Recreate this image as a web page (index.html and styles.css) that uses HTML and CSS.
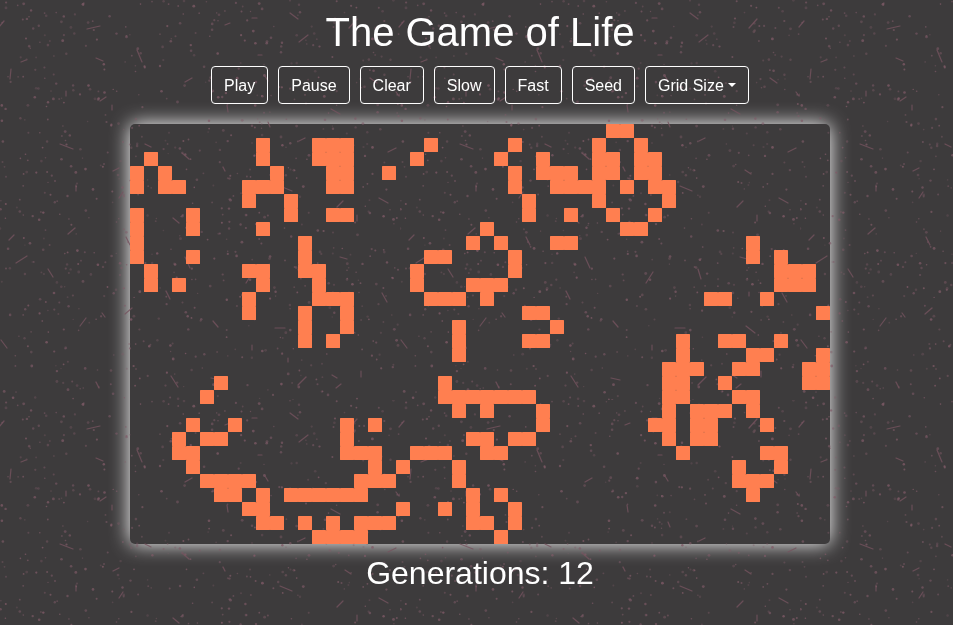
FILE: index.html
```html
<!DOCTYPE html>
<html lang="en">

<head>
    <meta charset="UTF-8">
    <meta name="viewport" content="width=device-width, initial-scale=1.0">
    <title>The Game of Life</title>
    <link rel="stylesheet" href="styles.css">
</head>

<body>
    <main class="page">
        <h1 class="title">The Game of Life</h1>
        <div class="toolbar">
            <button class="btn">Play</button>
            <button class="btn">Pause</button>
            <button class="btn">Clear</button>
            <button class="btn">Slow</button>
            <button class="btn">Fast</button>
            <button class="btn">Seed</button>
            <button class="btn dropdown-toggle">Grid Size</button>
        </div>
        <div class="board" id="board"></div>
        <h2 class="generations">Generations: 12</h2>
    </main>
    <div class="texture" id="texture"></div>
    <script src="script.js"></script>
</body>

</html>
```

FILE: styles.css
```css
html,
body {
    height: 100%;
    overflow: hidden;
}

body {
    margin: 0;
    background-color: #3d3b3c;
    color: #fff;
    font-family: "Liberation Sans", Arial, sans-serif;
}

/* speckles lie over the board and its glow, under the cells and the text */
.texture {
    position: fixed;
    inset: 0;
    z-index: 1;
    background-size: 400px 400px;
    pointer-events: none;
}

.page {
    display: flex;
    flex-direction: column;
    align-items: center;
    padding: 8px 0 0 7px;
}

.title,
.toolbar,
.generations,
.cell.alive {
    position: relative;
    z-index: 2;
}

.title {
    margin: 0 0 10px;
    font-size: 40px;
    font-weight: 400;
    line-height: 48px;
}

.toolbar {
    display: flex;
    gap: 10px;
    margin-bottom: 20px;
}

.btn {
    padding: 7px 12px 5px;
    border: 1px solid #fff;
    border-radius: 4px;
    background: transparent;
    color: #fff;
    font-family: inherit;
    font-size: 16px;
    line-height: 24px;
    cursor: pointer;
}

.dropdown-toggle::after {
    content: "";
    display: inline-block;
    margin-left: .255em;
    vertical-align: .255em;
    border-top: .3em solid;
    border-right: .3em solid transparent;
    border-left: .3em solid transparent;
}

.board {
    display: grid;
    grid-template-columns: repeat(50, 14px);
    grid-auto-rows: 14px;
    border-radius: 5px;
    box-shadow: 0 0 20px #fff;
}

.cell.alive {
    border-radius: .5px;
    background-color: coral;
}

.generations {
    margin: 10px 0 0;
    font-size: 32px;
    font-weight: 400;
    line-height: 38px;
}
```

FILE: script.js
```js
// live cells of each row, by column
const rows = [
    [34, 35],
    [9, 13, 14, 15, 21, 27, 33, 36],
    [1, 9, 13, 14, 15, 20, 26, 29, 33, 34, 36, 37],
    [0, 2, 10, 14, 15, 18, 27, 29, 30, 31, 33, 34, 36, 37],
    [0, 2, 3, 8, 9, 10, 14, 15, 27, 30, 31, 32, 33, 35, 37, 38],
    [8, 11, 28, 33, 38],
    [0, 4, 11, 14, 15, 28, 31, 34, 37],
    [0, 4, 9, 25, 35, 36],
    [0, 12, 24, 26, 30, 31, 44],
    [0, 4, 12, 21, 22, 27, 44, 46],
    [1, 8, 9, 12, 13, 20, 27, 46, 47, 48],
    [1, 3, 9, 13, 20, 24, 25, 26, 46, 47, 48],
    [8, 13, 14, 15, 21, 22, 23, 25, 41, 42, 45],
    [8, 12, 15, 28, 29, 49],
    [12, 15, 23, 30],
    [12, 14, 23, 28, 29, 39, 42, 43, 46],
    [23, 39, 44, 45, 49],
    [38, 39, 40, 43, 44, 48, 49],
    [6, 22, 38, 39, 42, 48, 49],
    [5, 22, 23, 24, 25, 26, 27, 28, 38, 39, 43, 44],
    [23, 25, 29, 38, 40, 41, 42, 44],
    [4, 7, 15, 17, 29, 37, 38, 40, 41, 45],
    [3, 5, 6, 15, 24, 25, 27, 28, 38, 40, 41],
    [3, 4, 15, 16, 17, 20, 21, 22, 25, 26, 39, 45, 46],
    [4, 17, 19, 23, 43, 46],
    [5, 6, 7, 8, 16, 17, 18, 23, 43, 44, 45],
    [6, 7, 9, 11, 12, 13, 14, 15, 16, 24, 26, 44],
    [8, 9, 19, 22, 24, 27],
    [9, 10, 12, 14, 16, 17, 18, 24, 25, 27],
    [13, 14, 15, 16, 26]
];

const board = document.getElementById('board');
rows.forEach(live => {
    for (let col = 0; col < 50; col++) {
        const cell = document.createElement('div');
        cell.className = live.includes(col) ? 'cell alive' : 'cell';
        board.appendChild(cell);
    }
});

// speckled wall texture, one 400x400 tile
const dashes = [
    [60, 144, 73, 149], [388, 152, 396, 148], [299, 141, 305, 138], [182, 153, 189, 159],
    [345, 170, 351, 174], [113, 171, 119, 168], [280, 186, 292, 191], [76, 185, 76, 191],
    [119, 198, 123, 192], [337, 207, 343, 201], [379, 198, 388, 203], [357, 215, 357, 221],
    [68, 234, 75, 228], [9, 240, 14, 235], [126, 237, 130, 245], [16, 263, 27, 256],
    [185, 257, 190, 268], [298, 269, 301, 279], [246, 283, 253, 272], [48, 269, 53, 277],
    [166, 291, 170, 299], [382, 293, 387, 302], [349, 292, 349, 296], [125, 314, 132, 308],
    [80, 326, 86, 318], [102, 313, 105, 317], [213, 321, 218, 327], [275, 328, 285, 328],
    [346, 326, 355, 333], [1, 340, 7, 348], [252, 345, 252, 350], [171, 376, 178, 387],
    [211, 378, 220, 380], [298, 385, 306, 377], [336, 388, 341, 384], [361, 371, 361, 377],
    [96, 382, 99, 388], [225, 25, 230, 23], [87, 29, 100, 26], [399, 27, 404, 21],
    [-1, 27, 4, 21], [349, 28, 357, 19], [137, 50, 142, 62], [96, 58, 103, 61],
    [21, 62, 26, 60], [258, 55, 262, 55], [10, 79, 11, 69], [185, 82, 192, 78],
    [265, 76, 268, 81], [396, 92, 399, 96], [66, 91, 66, 96], [100, 101, 106, 97],
    [112, 105, 112, 110], [227, 105, 228, 112], [331, 109, 340, 114], [340, 257, 347, 259],
    [288, 358, 288, 362], [332, 375, 337, 378], [290, 13, 298, 19], [252, 18, 257, 18],
    [299, 42, 308, 35], [173, 218, 179, 223], [145, 144, 151, 147], [223, 167, 225, 171],
    [370, 78, 377, 83], [268, 122, 270, 127]
];

// small hash so the dots do not fall on a lattice
function rand(n) {
    const v = Math.sin(n * 127.1 + 311.7) * 43758.5453;
    return v - Math.floor(v);
}

let tile = '<svg xmlns="http://www.w3.org/2000/svg" width="400" height="400">';
for (let i = 0; i < 850; i++) {
    const r = (0.7 + rand(i * 4) * 0.7).toFixed(1);
    const o = (0.3 + rand(i * 4 + 1) * 0.5).toFixed(2);
    const x = (rand(i * 4 + 2) * 400).toFixed(1);
    const y = (rand(i * 4 + 3) * 400).toFixed(1);
    tile += `<circle cx="${x}" cy="${y}" r="${r}" fill="#7f5a67" opacity="${o}"/>`;
}
dashes.forEach(d => {
    tile += `<line x1="${d[0]}" y1="${d[1]}" x2="${d[2]}" y2="${d[3]}" stroke="#75525e" stroke-width="1.2" stroke-linecap="round" opacity=".8"/>`;
});
tile += '</svg>';
document.getElementById('texture').style.backgroundImage = `url("data:image/svg+xml,${encodeURIComponent(tile)}")`;
```
